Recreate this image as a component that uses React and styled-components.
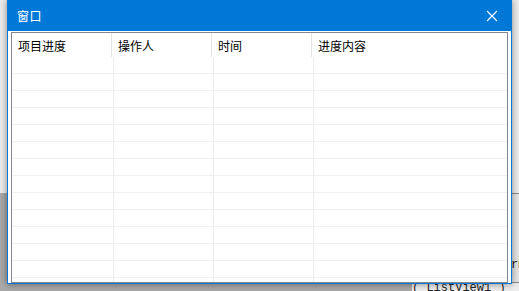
import React from "react";
import styled, { createGlobalStyle } from "styled-components";

const Global = createGlobalStyle`
  html, body { margin: 0; padding: 0; }
  body { font-family: "Noto Sans CJK SC", "Liberation Sans", sans-serif; }
`;

const Desktop = styled.div`
  position: relative;
  width: 519px;
  height: 291px;
  overflow: hidden;
  background: linear-gradient(to bottom, #ececec 0, #ececec 193px, #a9a9a9 193px);
`;

const BackLabel = styled.div`
  position: absolute;
  left: ${(p) => p.$x}px;
  top: ${(p) => p.$y}px;
  font-family: "Liberation Mono", monospace;
  font-size: 12px;
  color: #222;
  white-space: nowrap;
`;

const BackPanel = styled.div`
  position: absolute;
  left: ${(p) => p.$x}px;
  top: ${(p) => p.$y}px;
  width: ${(p) => p.$w}px;
  height: ${(p) => p.$h}px;
  background: ${(p) => p.$bg};
  border-top: 1px solid #8a8a8a;
`;

const Window = styled.div`
  position: absolute;
  left: 7px;
  top: 0;
  width: 503px;
  height: 283px;
  border: 1px solid #0078d7;
  border-top: none;
  background: #fff;
  box-shadow: 0 0 7px rgba(0, 0, 0, 0.45);
  display: flex;
  flex-direction: column;
  z-index: 2;
`;

const TitleBar = styled.div`
  height: 31px;
  flex: none;
  background: #0078d7;
  display: flex;
  align-items: center;
  justify-content: space-between;
  padding-left: 9px;
  color: #fff;
`;

const Title = styled.span`
  font-size: 12px;
  line-height: 1;
  letter-spacing: 0.5px;
`;

const Close = styled.div`
  width: 46px;
  height: 31px;
  display: flex;
  align-items: center;
  justify-content: center;
  margin-right: -4px;
`;

const Body = styled.div`
  flex: 1;
  padding: 1px 3px 0 3px;
  display: flex;
  min-height: 0;
`;

const ListView = styled.div`
  flex: 1;
  border: 1px solid #828790;
  background: #fff;
  overflow: hidden;
  display: flex;
  flex-direction: column;
`;

const Header = styled.div`
  height: 24px;
  flex: none;
  display: grid;
  grid-template-columns: 100px 100px 100px 1fr;
`;

const HeadCell = styled.div`
  font-size: 12px;
  color: #000;
  padding-left: 6px;
  display: flex;
  align-items: center;
  border-right: ${(p) => (p.$last ? "none" : "1px solid #e5e5e5")};
`;

const Row = styled.div`
  height: 16px;
  flex: none;
  margin-left: 1px;
  display: grid;
  grid-template-columns: 101px 100px 100px 1fr;
  border-bottom: 1px solid #f0f0f0;
`;

const Cell = styled.div`
  border-right: ${(p) => (p.$last ? "none" : "1px solid #ececec")};
`;

const cols = ["项目进度", "操作人", "时间", "进度内容"];

export default function App() {
  return (
    <>
      <Global />
      <Desktop>
        <BackPanel $x={512} $y={193} $w={7} $h={98} $bg="#e4e4e4" />
        <BackPanel $x={412} $y={282} $w={107} $h={9} $bg="#ededed" />
        <BackLabel $x={511} $y={258}>rm</BackLabel>
        <BackLabel $x={412} $y={281}>( ListView1 )</BackLabel>
        <Window>
          <TitleBar>
            <Title>窗口</Title>
            <Close>
              <svg width="12" height="12" viewBox="0 0 12 12">
                <path d="M1 1 L11 11 M11 1 L1 11" stroke="#fff" strokeWidth="1.1" fill="none" />
              </svg>
            </Close>
          </TitleBar>
          <Body>
            <ListView>
              <Header>
                {cols.map((c, i) => (
                  <HeadCell key={c} $last={i === cols.length - 1}>
                    {c}
                  </HeadCell>
                ))}
              </Header>
              {Array.from({ length: 14 }).map((_, r) => (
                <Row key={r}>
                  <Cell />
                  <Cell />
                  <Cell />
                  <Cell $last />
                </Row>
              ))}
            </ListView>
          </Body>
        </Window>
      </Desktop>
    </>
  );
}
